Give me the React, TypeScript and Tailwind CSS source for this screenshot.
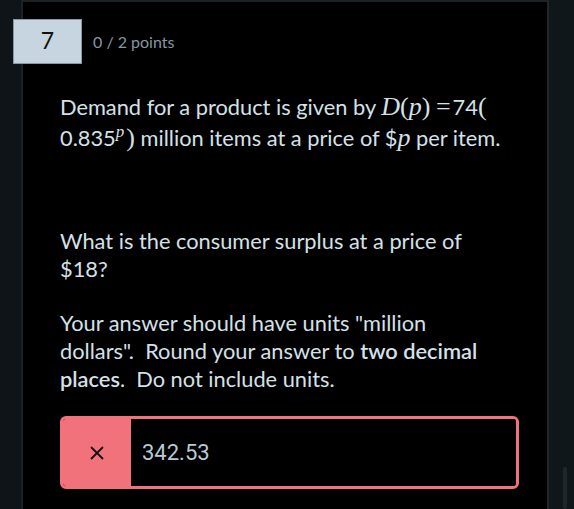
import React from "react";

export default function App() {
  const math = { fontFamily: '"Liberation Serif", "DejaVu Serif", serif' };
  return (
    <div className="w-[574px] h-[509px] bg-[#0e1417] flex overflow-hidden" style={{ fontFamily: 'Lato, "Noto Sans", sans-serif' }}>
      <div className="w-[23px] shrink-0 bg-[#0e1417] border-r-2 border-[#1b2226]" />
      <div className="w-[524px] shrink-0 bg-black border-t-2 border-[#1c2327] relative">
        <div className="absolute left-[-10px] top-[17px] flex items-center">
          <div className="w-[69px] h-[45px] bg-[#c6d5df] border border-[#8897a0] flex items-center justify-center text-[23px] text-[#111] pb-[2px]">7</div>
          <div className="ml-[11px] text-[16px] text-[#8797a3]">0 / 2 points</div>
        </div>
        <div className="pl-[37px] pr-[10px] pt-[89px] text-[21.8px] text-[#d5e0e8] whitespace-nowrap">
          <p className="leading-[31px]">
            Demand for a product is given by{" "}
            <span style={math} className="italic text-[26px]">D</span>
            <span style={math} className="text-[26px]">(</span>
            <span style={math} className="italic text-[26px]">p</span>
            <span style={math} className="text-[26px]">)</span>{" "}
            <span style={math} className="text-[26px] mr-[2px]">=</span>74
            <span style={math} className="text-[26px]">(</span>
            <br />
            0.835<sup style={math} className="italic text-[17px] top-[-9px] mr-[2px]">p</sup>
            <span style={math} className="text-[26px]">)</span> million items at a price of $
            <span style={math} className="italic text-[26px]">p</span> per item.
          </p>
          <p className="leading-[28px] mt-[74px]">What is the consumer surplus at a price of<br />$18?</p>
          <p className="leading-[28px] mt-[26px]">
            Your answer should have units "million<br />
            dollars".&nbsp; Round your answer to <b className="font-semibold">two decimal</b><br />
            <b className="font-semibold">places</b>.&nbsp; Do not include units.
          </p>
          <div className="mt-[23px] w-[459px] h-[73px] border-[3px] border-[#f2727b] rounded-[6px] flex overflow-hidden">
            <div className="w-[68px] bg-[#f2727b] flex items-center justify-center">
              <svg width="16" height="16" viewBox="0 0 16 16" stroke="#111" strokeWidth="1.8" fill="none">
                <path d="M2 2L14 14M14 2L2 14" />
              </svg>
            </div>
            <div className="flex-1 bg-black flex items-center pl-[11px] text-[22px] text-[#b9c9d4]" style={{ fontFamily: 'Roboto, sans-serif' }}>342.53</div>
          </div>
        </div>
      </div>
      <div className="flex-1 bg-[#10171a] border-l-2 border-[#1e262b] relative">
        <div className="absolute left-[14px] top-[467px] w-[4px] h-[42px] bg-[#1f272b] rounded" />
      </div>
    </div>
  );
}
